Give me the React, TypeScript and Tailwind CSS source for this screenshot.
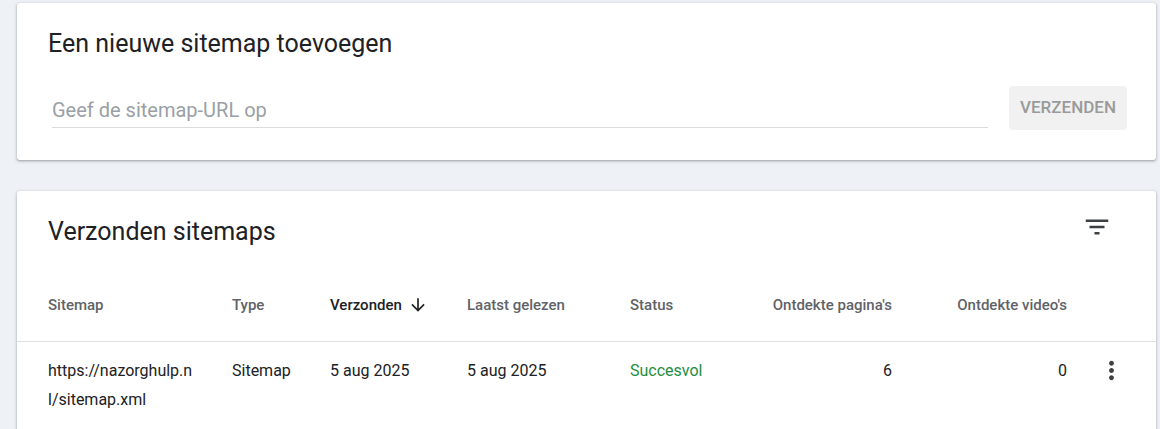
import React from "react";

function FilterIcon() {
  return (
    <svg width="30" height="30" viewBox="0 0 24 24" fill="#3c4043">
      <path d="M10 18h4v-2h-4v2zM3 6v2h18V6H3zm3 7h12v-2H6v2z" />
    </svg>
  );
}

function ArrowDown() {
  return (
    <svg width="20" height="20" viewBox="0 0 24 24" fill="#202124">
      <path d="M20 12l-1.41-1.41L13 16.17V4h-2v12.17l-5.58-5.59L4 12l8 8 8-8z" />
    </svg>
  );
}

function MoreVert() {
  return (
    <svg width="29" height="29" viewBox="0 0 24 24" fill="#3c4043">
      <path d="M12 8c1.1 0 2-.9 2-2s-.9-2-2-2-2 .9-2 2 .9 2 2 2zm0 2c-1.1 0-2 .9-2 2s.9 2 2 2 2-.9 2-2-.9-2-2-2zm0 6c-1.1 0-2 .9-2 2s.9 2 2 2 2-.9 2-2-.9-2-2-2z" />
    </svg>
  );
}

export default function App() {
  const card =
    "bg-white rounded-[3px] shadow-[0_1px_2px_0_rgba(60,64,67,0.3),0_1px_3px_1px_rgba(60,64,67,0.15)]";
  return (
    <div
      className="w-full h-[429px] overflow-hidden bg-[#eef1f5] pt-[3px] pl-[17px] pr-[4px]"
      style={{ fontFamily: "Roboto, 'Noto Sans', Arial, sans-serif" }}
    >
      {/* Card 1 */}
      <div className={`${card} h-[157px] pl-[31px] pr-[29px] pt-[26px]`}>
        <h2 className="text-[25px] leading-[30px] text-[#202124] font-normal">
          Een nieuwe sitemap toevoegen
        </h2>
        <div className="mt-[27px] flex items-start gap-[21px]">
          <div className="flex-1 ml-[4px] h-[42px] border-b border-[#dadce0]">
            <input
              type="text"
              placeholder="Geef de sitemap-URL op"
              className="w-full h-[41px] pt-[7px] bg-transparent outline-none text-[20px] text-[#202124] placeholder:text-[#9aa0a6]"
            />
          </div>
          <button className="h-[44px] w-[118px] rounded-[4px] bg-[#f1f1f1] text-[17px] font-medium text-[#9a9a9a]">
            VERZENDEN
          </button>
        </div>
      </div>

      {/* Card 2 */}
      <div className={`${card} mt-[31px] h-[320px] pl-[31px]`}>
        <div className="flex items-start justify-between pt-[21px]">
          <h2 className="mt-[5px] text-[25px] leading-[30px] text-[#202124] font-normal">
            Verzonden sitemaps
          </h2>
          <div className="mr-[44px]">
            <FilterIcon />
          </div>
        </div>

        {/* Header row */}
        <div className="-ml-[31px] pl-[31px] mt-[48px] pb-[26px] border-b border-[#e0e0e0] flex items-center text-[15px] leading-[20px] font-medium text-[#5f6368]">
          <div className="w-[184px]">Sitemap</div>
          <div className="w-[98px]">Type</div>
          <div className="w-[137px] flex items-center text-[#202124]">
            <span>Verzonden</span>
            <span className="ml-[6px] flex">
              <ArrowDown />
            </span>
          </div>
          <div className="w-[163px]">Laatst gelezen</div>
          <div className="w-[130px]">Status</div>
          <div className="w-[132px] text-right">Ontdekte pagina's</div>
          <div className="w-[175px] text-right">Ontdekte video's</div>
        </div>

        {/* Data row */}
        <div className="pt-[14px] flex items-start text-[16px] leading-[29px] text-[#202124]">
          <div className="w-[184px]">
            <div className="w-[152px] break-all">https://nazorghulp.nl/sitemap.xml</div>
          </div>
          <div className="w-[98px]">Sitemap</div>
          <div className="w-[137px]">5 aug 2025</div>
          <div className="w-[163px]">5 aug 2025</div>
          <div className="w-[130px] text-[#1e8e3e]">Succesvol</div>
          <div className="w-[132px] text-right">6</div>
          <div className="w-[175px] text-right">0</div>
          <div className="pl-[30px] flex">
            <MoreVert />
          </div>
        </div>
      </div>
    </div>
  );
}
